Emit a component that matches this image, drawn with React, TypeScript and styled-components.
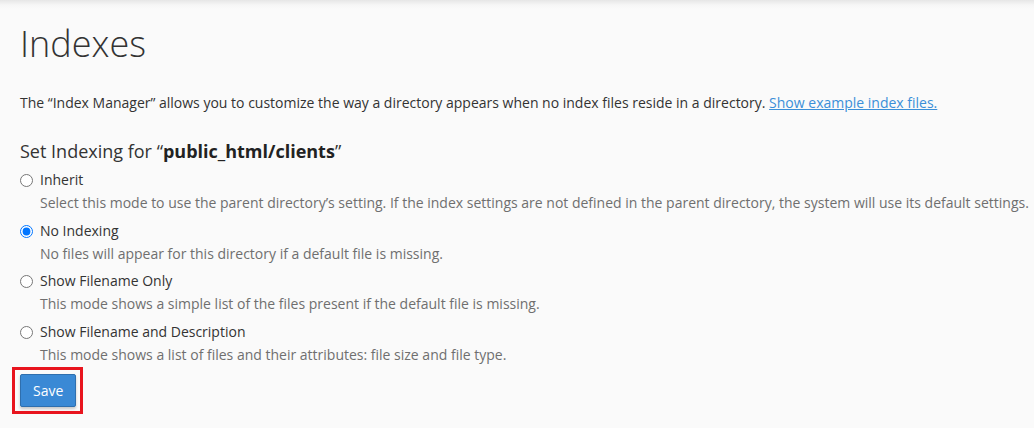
import React, { useState } from "react";
import styled, { createGlobalStyle } from "styled-components";

const Global = createGlobalStyle`
  html, body {
    margin: 0;
    padding: 0;
    background: #fafafa linear-gradient(#e6e6e6 0px, #f6f6f6 5px, #fafafa 9px) no-repeat;
    font-family: "Open Sans", "Liberation Sans", sans-serif;
    color: #333;
  }
`;

const Page = styled.main`
  padding: 0 0 0 20px;
  min-height: 428px;
  box-sizing: border-box;
`;

const Title = styled.h1`
  margin: 0;
  padding-top: 22px;
  font-size: 36px;
  font-weight: 300;
  line-height: 44px;
  color: #333;
`;

const Intro = styled.p`
  margin: 27px 0 0;
  font-size: 14px;
  line-height: 20px;
  color: #333;
`;

const Link = styled.a`
  color: #3b8fd8;
  text-decoration: underline;
`;

const Heading = styled.h2`
  margin: 27px 0 0;
  font-size: 18px;
  font-weight: 400;
  line-height: 22px;
  color: #333;
`;

const Strong = styled.strong`
  font-weight: 700;
  color: #222;
`;

const Options = styled.div`
  display: flex;
  flex-direction: column;
  gap: 7.67px;
  margin-top: 8px;
`;

const Option = styled.div`
  display: grid;
  grid-template-columns: 20px auto;
`;

const Label = styled.label`
  display: contents;
  cursor: pointer;
`;

const Radio = styled.input`
  margin: 4px 0 0;
  width: 13px;
  height: 13px;
  grid-column: 1;
  align-self: start;
`;

const LabelText = styled.span`
  grid-column: 2;
  font-size: 14px;
  line-height: 20px;
  margin-bottom: 3px;
  color: #333;
`;

const Desc = styled.div`
  grid-column: 2;
  font-size: 14px;
  line-height: 20px;
  color: #6f6f6f;
  white-space: nowrap;
`;

const Actions = styled.div`
  margin-top: 9px;
`;

const Highlight = styled.span`
  position: relative;
  display: inline-block;
  &::after {
    content: "";
    position: absolute;
    left: -8px;
    top: -7px;
    right: -7px;
    bottom: -7px;
    border: 3px solid #e8141e;
    pointer-events: none;
  }
`;

const Button = styled.button`
  display: block;
  font-family: "Open Sans", "Liberation Sans", sans-serif;
  font-size: 14px;
  line-height: 19px;
  padding: 6px 12px;
  color: #fff;
  background: #3a89d5;
  border: 1px solid #2f6fae;
  border-radius: 2px;
  box-shadow: 0 2px 3px rgba(0, 0, 0, 0.2);
  cursor: pointer;
`;

const options = [
  {
    id: "inherit",
    label: "Inherit",
    desc:
      "Select this mode to use the parent directory’s setting. If the index settings are not defined in the parent directory, the system will use its default settings.",
  },
  {
    id: "none",
    label: "No Indexing",
    desc: "No files will appear for this directory if a default file is missing.",
  },
  {
    id: "filename",
    label: "Show Filename Only",
    desc: "This mode shows a simple list of the files present if the default file is missing.",
  },
  {
    id: "full",
    label: "Show Filename and Description",
    desc: "This mode shows a list of files and their attributes: file size and file type.",
  },
];

export default function App() {
  const [value, setValue] = useState("none");
  return (
    <>
      <Global />
      <Page>
        <Title>Indexes</Title>
        <Intro>
          The “Index Manager” allows you to customize the way a directory appears when no index
          files reside in a directory. <Link href="#">Show example index files.</Link>
        </Intro>
        <Heading>
          Set Indexing for “<Strong>public_html/clients</Strong>”
        </Heading>
        <Options>
          {options.map((o) => (
            <Option key={o.id}>
              <Label>
                <Radio
                  type="radio"
                  name="indexing"
                  checked={value === o.id}
                  onChange={() => setValue(o.id)}
                />
                <LabelText>{o.label}</LabelText>
              </Label>
              <Desc>{o.desc}</Desc>
            </Option>
          ))}
        </Options>
        <Actions>
          <Highlight>
            <Button type="button">Save</Button>
          </Highlight>
        </Actions>
      </Page>
    </>
  );
}
